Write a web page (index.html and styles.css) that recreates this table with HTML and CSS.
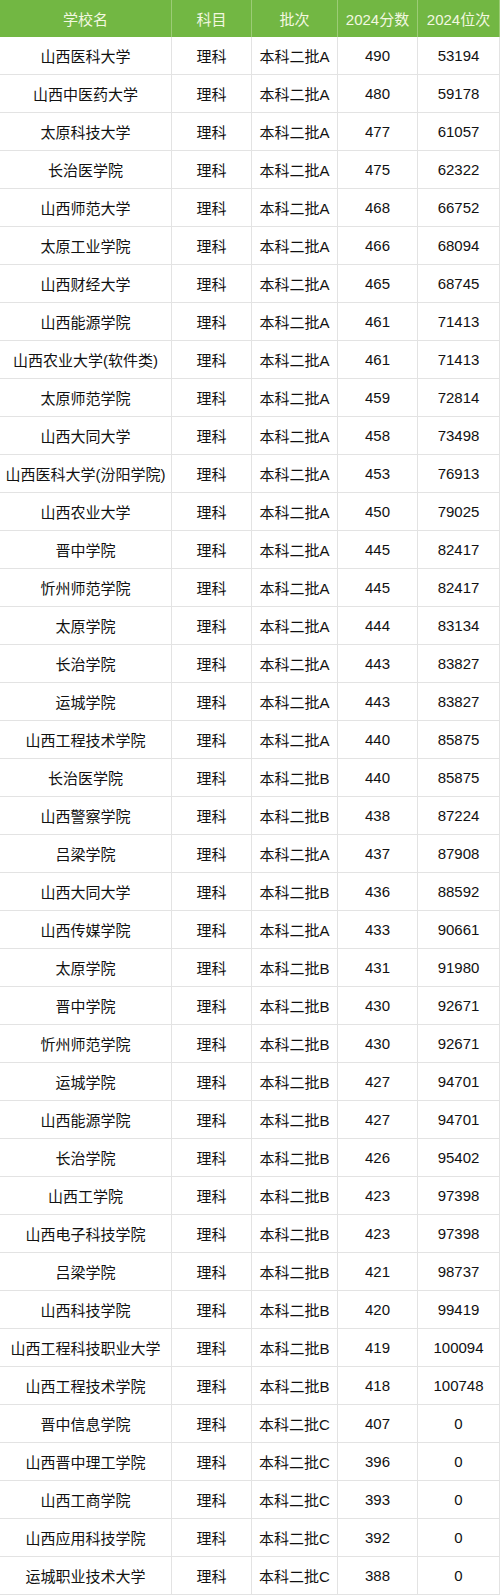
FILE: index.html
```html
<!DOCTYPE html>
<html lang="zh-CN">
<head>
<meta charset="utf-8">
<title>山西院校2024分数</title>
<link rel="stylesheet" href="styles.css">
</head>
<body>
<div class="score-table">
<div class="cell head">学校名</div><div class="cell head">科目</div><div class="cell head">批次</div><div class="cell head">2024分数</div><div class="cell head">2024位次</div>
<div class="cell">山西医科大学</div><div class="cell">理科</div><div class="cell">本科二批A</div><div class="cell">490</div><div class="cell">53194</div>
<div class="cell">山西中医药大学</div><div class="cell">理科</div><div class="cell">本科二批A</div><div class="cell">480</div><div class="cell">59178</div>
<div class="cell">太原科技大学</div><div class="cell">理科</div><div class="cell">本科二批A</div><div class="cell">477</div><div class="cell">61057</div>
<div class="cell">长治医学院</div><div class="cell">理科</div><div class="cell">本科二批A</div><div class="cell">475</div><div class="cell">62322</div>
<div class="cell">山西师范大学</div><div class="cell">理科</div><div class="cell">本科二批A</div><div class="cell">468</div><div class="cell">66752</div>
<div class="cell">太原工业学院</div><div class="cell">理科</div><div class="cell">本科二批A</div><div class="cell">466</div><div class="cell">68094</div>
<div class="cell">山西财经大学</div><div class="cell">理科</div><div class="cell">本科二批A</div><div class="cell">465</div><div class="cell">68745</div>
<div class="cell">山西能源学院</div><div class="cell">理科</div><div class="cell">本科二批A</div><div class="cell">461</div><div class="cell">71413</div>
<div class="cell">山西农业大学(软件类)</div><div class="cell">理科</div><div class="cell">本科二批A</div><div class="cell">461</div><div class="cell">71413</div>
<div class="cell">太原师范学院</div><div class="cell">理科</div><div class="cell">本科二批A</div><div class="cell">459</div><div class="cell">72814</div>
<div class="cell">山西大同大学</div><div class="cell">理科</div><div class="cell">本科二批A</div><div class="cell">458</div><div class="cell">73498</div>
<div class="cell">山西医科大学(汾阳学院)</div><div class="cell">理科</div><div class="cell">本科二批A</div><div class="cell">453</div><div class="cell">76913</div>
<div class="cell">山西农业大学</div><div class="cell">理科</div><div class="cell">本科二批A</div><div class="cell">450</div><div class="cell">79025</div>
<div class="cell">晋中学院</div><div class="cell">理科</div><div class="cell">本科二批A</div><div class="cell">445</div><div class="cell">82417</div>
<div class="cell">忻州师范学院</div><div class="cell">理科</div><div class="cell">本科二批A</div><div class="cell">445</div><div class="cell">82417</div>
<div class="cell">太原学院</div><div class="cell">理科</div><div class="cell">本科二批A</div><div class="cell">444</div><div class="cell">83134</div>
<div class="cell">长治学院</div><div class="cell">理科</div><div class="cell">本科二批A</div><div class="cell">443</div><div class="cell">83827</div>
<div class="cell">运城学院</div><div class="cell">理科</div><div class="cell">本科二批A</div><div class="cell">443</div><div class="cell">83827</div>
<div class="cell">山西工程技术学院</div><div class="cell">理科</div><div class="cell">本科二批A</div><div class="cell">440</div><div class="cell">85875</div>
<div class="cell">长治医学院</div><div class="cell">理科</div><div class="cell">本科二批B</div><div class="cell">440</div><div class="cell">85875</div>
<div class="cell">山西警察学院</div><div class="cell">理科</div><div class="cell">本科二批B</div><div class="cell">438</div><div class="cell">87224</div>
<div class="cell">吕梁学院</div><div class="cell">理科</div><div class="cell">本科二批A</div><div class="cell">437</div><div class="cell">87908</div>
<div class="cell">山西大同大学</div><div class="cell">理科</div><div class="cell">本科二批B</div><div class="cell">436</div><div class="cell">88592</div>
<div class="cell">山西传媒学院</div><div class="cell">理科</div><div class="cell">本科二批A</div><div class="cell">433</div><div class="cell">90661</div>
<div class="cell">太原学院</div><div class="cell">理科</div><div class="cell">本科二批B</div><div class="cell">431</div><div class="cell">91980</div>
<div class="cell">晋中学院</div><div class="cell">理科</div><div class="cell">本科二批B</div><div class="cell">430</div><div class="cell">92671</div>
<div class="cell">忻州师范学院</div><div class="cell">理科</div><div class="cell">本科二批B</div><div class="cell">430</div><div class="cell">92671</div>
<div class="cell">运城学院</div><div class="cell">理科</div><div class="cell">本科二批B</div><div class="cell">427</div><div class="cell">94701</div>
<div class="cell">山西能源学院</div><div class="cell">理科</div><div class="cell">本科二批B</div><div class="cell">427</div><div class="cell">94701</div>
<div class="cell">长治学院</div><div class="cell">理科</div><div class="cell">本科二批B</div><div class="cell">426</div><div class="cell">95402</div>
<div class="cell">山西工学院</div><div class="cell">理科</div><div class="cell">本科二批B</div><div class="cell">423</div><div class="cell">97398</div>
<div class="cell">山西电子科技学院</div><div class="cell">理科</div><div class="cell">本科二批B</div><div class="cell">423</div><div class="cell">97398</div>
<div class="cell">吕梁学院</div><div class="cell">理科</div><div class="cell">本科二批B</div><div class="cell">421</div><div class="cell">98737</div>
<div class="cell">山西科技学院</div><div class="cell">理科</div><div class="cell">本科二批B</div><div class="cell">420</div><div class="cell">99419</div>
<div class="cell">山西工程科技职业大学</div><div class="cell">理科</div><div class="cell">本科二批B</div><div class="cell">419</div><div class="cell">100094</div>
<div class="cell">山西工程技术学院</div><div class="cell">理科</div><div class="cell">本科二批B</div><div class="cell">418</div><div class="cell">100748</div>
<div class="cell">晋中信息学院</div><div class="cell">理科</div><div class="cell">本科二批C</div><div class="cell">407</div><div class="cell">0</div>
<div class="cell">山西晋中理工学院</div><div class="cell">理科</div><div class="cell">本科二批C</div><div class="cell">396</div><div class="cell">0</div>
<div class="cell">山西工商学院</div><div class="cell">理科</div><div class="cell">本科二批C</div><div class="cell">393</div><div class="cell">0</div>
<div class="cell">山西应用科技学院</div><div class="cell">理科</div><div class="cell">本科二批C</div><div class="cell">392</div><div class="cell">0</div>
<div class="cell">运城职业技术大学</div><div class="cell">理科</div><div class="cell">本科二批C</div><div class="cell">388</div><div class="cell">0</div>
</div>
</body>
</html>
```
FILE: styles.css
```css
html, body {
  margin: 0;
  padding: 0;
  background: #ffffff;
}

.score-table {
  display: grid;
  width: 500px;
  grid-template-columns: 172px 80px 86px 80px 82px;
  grid-template-rows: 37px;
  grid-auto-rows: 38px;
  font-family: "Liberation Sans", "Noto Sans CJK SC", sans-serif;
  font-size: 15px;
  color: #111111;
}

.cell {
  display: flex;
  align-items: center;
  justify-content: center;
  white-space: nowrap;
  box-sizing: border-box;
  border-right: 1px solid #e3e3e3;
  border-bottom: 1px solid #e3e3e3;
}

.head {
  background: #72b743;
  color: #f3f8e0;
  border-right-color: #9ccc76;
  border-bottom: none;
}

.head:last-child {
  border-right: none;
}
```
